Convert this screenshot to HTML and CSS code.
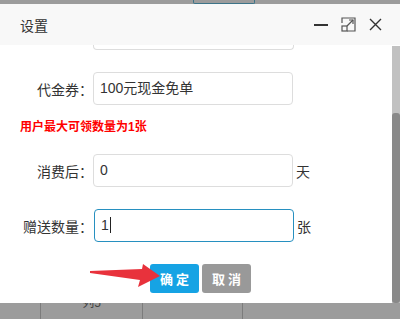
FILE: index.html
```html
<!DOCTYPE html>
<html lang="zh-CN">
<head>
    <meta charset="UTF-8">
    <meta name="viewport" content="width=device-width, initial-scale=1.0">
    <title>设置</title>
    <link rel="stylesheet" href="styles.css">
</head>
<body>

    <!-- страница за затемнением, сверху -->
    <div class="top-strip">
        <div class="back-btn"></div>
    </div>

    <div class="dialog">
        <div class="dialog-head">
            <span class="dialog-title">设置</span>
            <div class="head-tools">
                <svg class="tool" width="14" height="14" viewBox="0 0 14 14">
                    <line x1="0" y1="7" x2="14" y2="7" stroke="#333" stroke-width="2"/>
                </svg>
                <svg class="tool" width="15" height="15" viewBox="0 0 15 15">
                    <path d="M1 6 V1 H14 V14 H6" fill="none" stroke="#555" stroke-width="1.2"/>
                    <rect x="1" y="9" width="5" height="5" fill="none" stroke="#555" stroke-width="1.2"/>
                    <line x1="6" y1="9" x2="12" y2="3" stroke="#555" stroke-width="1.2"/>
                    <polyline points="8,3 12,3 12,7" fill="none" stroke="#555" stroke-width="1.2"/>
                </svg>
                <svg class="tool" width="13" height="13" viewBox="0 0 13 13">
                    <path d="M1 1 L12 12 M12 1 L1 12" stroke="#333" stroke-width="1.4"/>
                </svg>
            </div>
        </div>

        <div class="dialog-body">
            <div class="form">
                <!-- нижний край поля, прокрученного вверх -->
                <div class="cut-input"></div>

                <div class="row first">
                    <label class="row-label">代金券<span class="colon">：</span></label>
                    <div class="field">100元现金免单</div>
                </div>

                <p class="note">用户最大可领数量为1张</p>

                <div class="row">
                    <label class="row-label">消费后<span class="colon">：</span></label>
                    <div class="field">0</div>
                    <span class="suffix">天</span>
                </div>

                <div class="row">
                    <label class="row-label">赠送数量<span class="colon">：</span></label>
                    <div class="field focused">1<span class="caret"></span></div>
                    <span class="suffix">张</span>
                </div>

                <div class="actions">
                    <button class="btn btn-ok">确定</button>
                    <button class="btn btn-cancel">取消</button>
                </div>

                <svg class="arrow" width="80" height="30" viewBox="0 0 80 30">
                    <polygon points="0,8 52,6 53,1 70,13 48,24 50,17 0,10" fill="#e8323c"/>
                </svg>
            </div>
            <div class="scrollbar">
                <div class="thumb"></div>
            </div>
        </div>
    </div>

    <!-- таблица под затемнением, снизу -->
    <div class="bottom-strip">
        <div class="cell c1"></div>
        <div class="cell c2"><span class="cell-text">列5</span></div>
        <div class="cell c3"></div>
        <div class="cell c4"></div>
    </div>

</body>
</html>
```

FILE: styles.css
```css
body {
    margin: 0;
    width: 400px;
    height: 319px;
    overflow: hidden;
    background-color: #9c9c9c;
    font-family: "Liberation Sans", "Noto Sans CJK SC", sans-serif;
    color: #333;
}

.top-strip {
    height: 4px;
    padding-left: 193px;
}

.back-btn {
    width: 60px;
    height: 3px;
    border: 1px solid #3d7488;
    border-top: none;
    border-radius: 0 0 2px 2px;
}

.dialog {
    position: relative;
    z-index: 1;
    height: 299px;
    background-color: #fff;
    display: flex;
    flex-direction: column;
}

.dialog-head {
    height: 41px;
    flex-shrink: 0;
    background-color: #f8f8f8;
    display: flex;
    align-items: center;
    justify-content: space-between;
    padding: 0 18px 0 20px;
}

.dialog-title {
    font-size: 14px;
}

.head-tools {
    display: flex;
    align-items: center;
    gap: 13px;
}

.tool {
    display: block;
}

.dialog-body {
    flex: 1;
    display: flex;
    overflow: hidden;
}

.form {
    position: relative;
    flex: 1;
}

.cut-input {
    margin-left: 93px;
    width: 199px;
    height: 4px;
    border: 1px solid #ddd;
    border-top: none;
    border-radius: 0 0 4px 4px;
}

.row {
    display: flex;
    align-items: center;
    margin-top: 22px;
}

.row.first {
    margin-top: 22px;
}

.row-label {
    width: 93px;
    text-align: right;
    font-size: 14px;
}

/* центрированное двоеточие, как в YaHei */
.colon {
    font-family: "Noto Sans CJK TC", sans-serif;
}

.field {
    width: 200px;
    height: 33px;
    box-sizing: border-box;
    border: 1px solid #ddd;
    border-radius: 4px;
    padding-left: 6px;
    font-size: 14px;
    line-height: 31px;
    color: #333;
}

.field.focused {
    border-color: #2790c0;
    margin-left: 1px;
}

.caret {
    display: inline-block;
    width: 1px;
    height: 16px;
    background-color: #222;
    vertical-align: -3px;
    margin-left: 1px;
}

.suffix {
    margin-left: 3px;
    font-size: 14px;
}

.note {
    margin: 15px 0 0 20px;
    font-size: 12px;
    line-height: 14px;
    font-weight: bold;
    color: #f00;
}

.note + .row {
    margin-top: 20px;
}

.actions {
    display: flex;
    gap: 3px;
    padding-left: 150px;
    margin-top: 22px;
}

.btn {
    width: 49px;
    height: 29px;
    border: none;
    border-radius: 3px;
    color: #fff;
    font-family: "Noto Sans CJK SC", sans-serif;
    font-size: 13px;
    font-weight: bold;
    letter-spacing: 3px;
    padding: 0 0 0 3px;
}

.btn-ok {
    background-color: #16a3e4;
}

.btn-cancel {
    background-color: #999;
}

/* красная стрелка-пометка поверх формы */
.arrow {
    position: absolute;
    left: 90px;
    top: 218px;
}

.scrollbar {
    width: 8px;
    margin-top: 1px;
    background-color: #c1c1c1;
}

.thumb {
    margin-top: 67px;
    height: 190px;
    background-color: #898989;
    border-radius: 3px;
}

.bottom-strip {
    height: 16px;
    display: flex;
}

.cell {
    height: 16px;
    border-right: 1px solid #7c7c7c;
    box-sizing: border-box;
}

.c1 { width: 41px; }
.c2 { width: 102px; text-align: center; }
.c3 { width: 100px; }
.c4 { flex: 1; border-right: none; }

.cell-text {
    display: block;
    margin-top: -6px;
    font-size: 12px;
    line-height: 12px;
    color: #444;
}
```
